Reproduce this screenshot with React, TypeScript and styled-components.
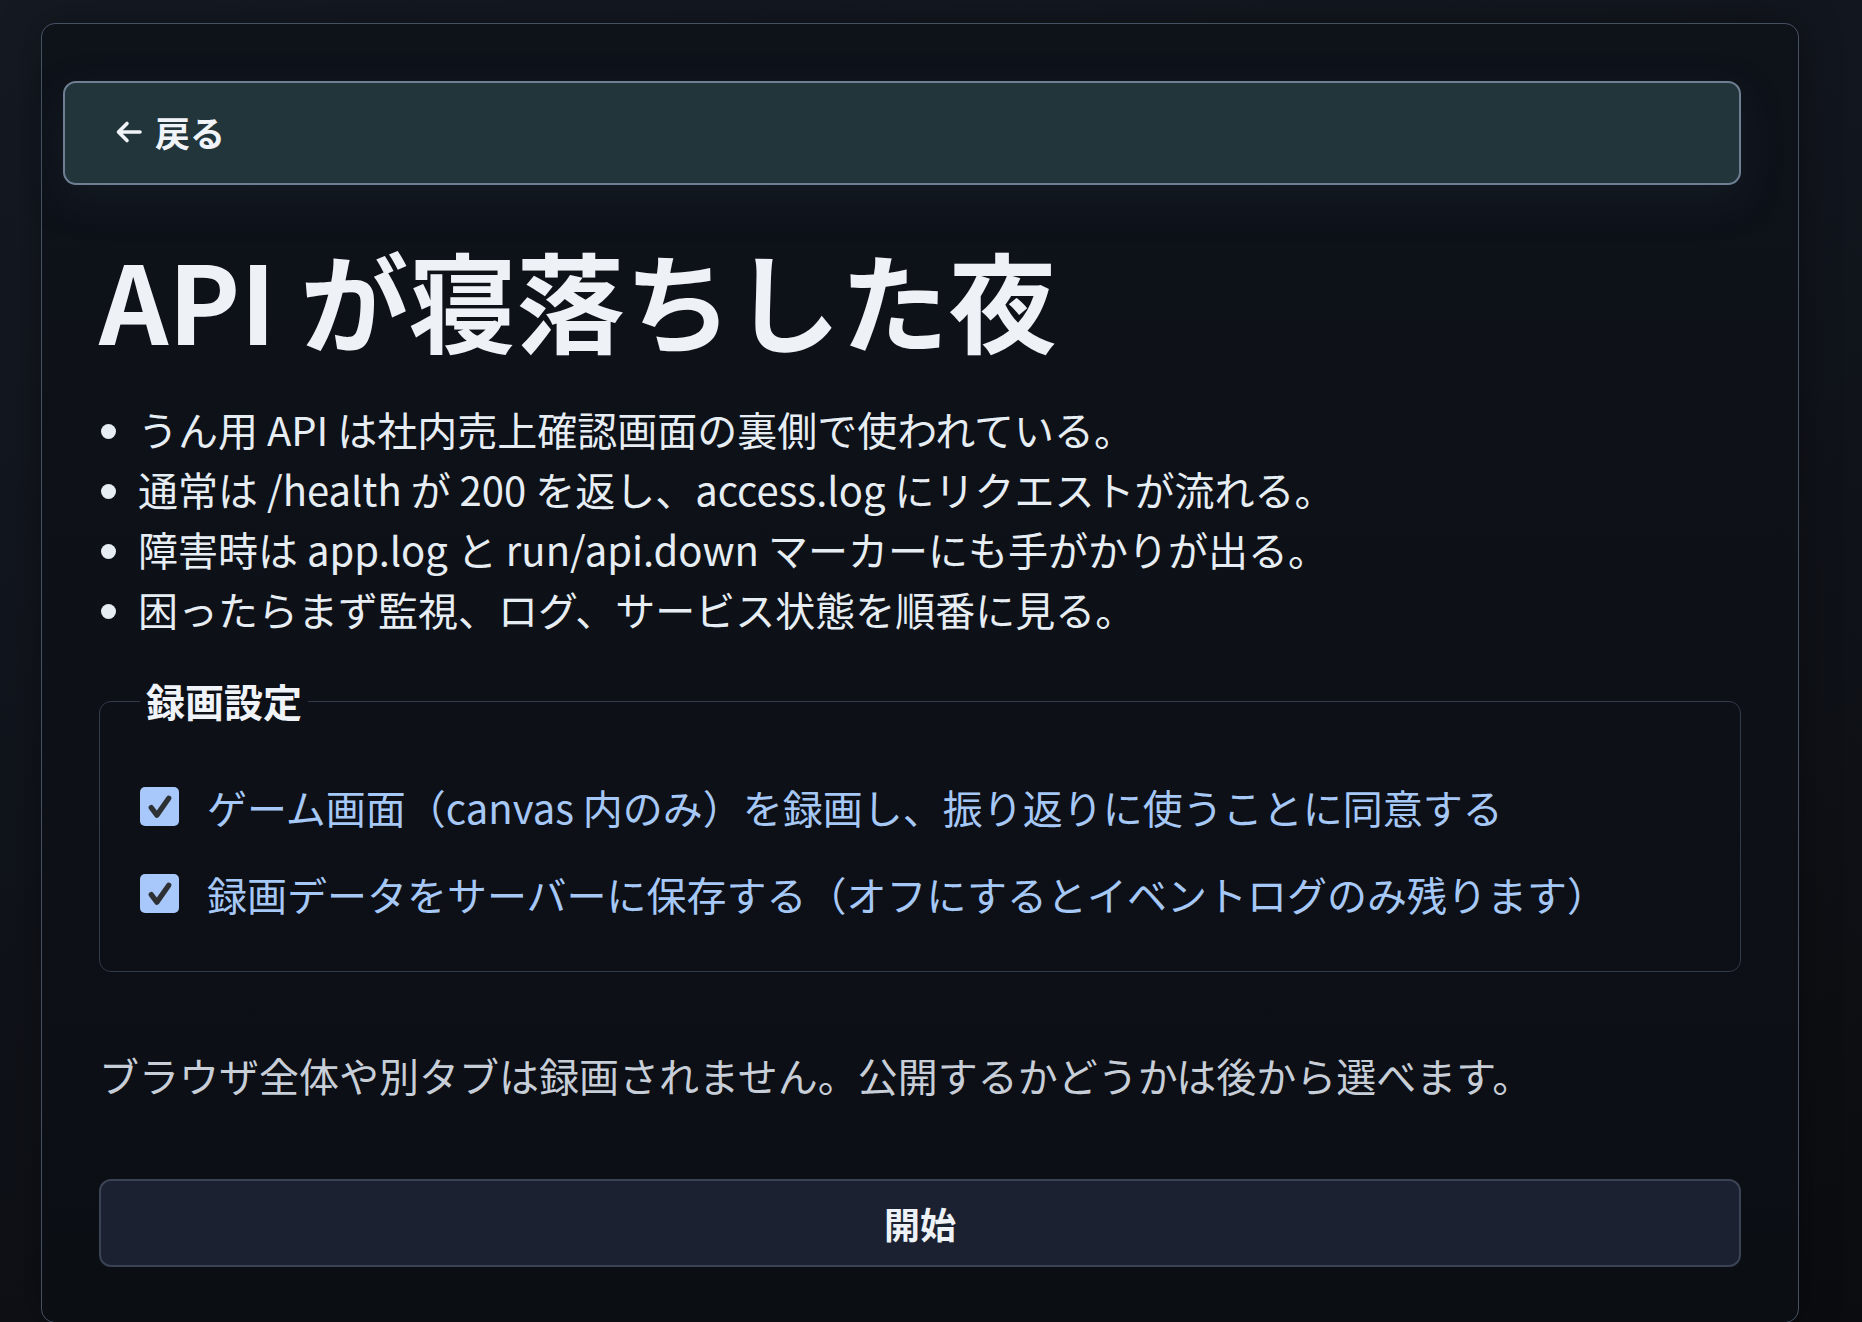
import React, { useState } from "react";
import styled, { createGlobalStyle } from "styled-components";

const GlobalStyle = createGlobalStyle`
  html, body {
    margin: 0;
    padding: 0;
    background: linear-gradient(165deg, #151a22 0%, #10141b 45%, #0b0c0f 100%);
    min-height: 100%;
  }
  body {
    font-family: "Noto Sans CJK JP", "Noto Sans", sans-serif;
    color: #e6edf3;
  }
`;

const Page = styled.div`
  padding: 23px 0 0 41px;
`;

const Card = styled.main`
  width: 1758px;
  box-sizing: border-box;
  padding: 57px 57px 55px;
  border: 1.5px solid #465063;
  border-radius: 14px;
  background: linear-gradient(180deg, #0e1219 0%, #0d1017 60%, #0b0e13 100%);
  box-shadow: 0 0 40px rgba(0, 0, 0, 0.35);
  display: flex;
  flex-direction: column;
`;

const BackButton = styled.button`
  margin-left: -36px;
  height: 104px;
  padding: 0 50px 3px;
  display: flex;
  align-items: center;
  gap: 12px;
  background: #22353a;
  border: 2px solid #6f7f93;
  border-radius: 13px;
  color: #f0f4f8;
  font-family: inherit;
  font-size: 35px;
  font-weight: 700;
  cursor: pointer;
  box-shadow: 0 14px 40px rgba(40, 55, 70, 0.28);
`;

const Title = styled.h1`
  margin: 49px 0 0;
  font-size: 108px;
  line-height: 1.2;
  font-weight: 700;
  color: #eef2f7;
  letter-spacing: 0;
`;

const Bullets = styled.ul`
  margin: 35px 0 0;
  padding: 0 0 0 39px;
  font-size: 40px;
  line-height: 60px;
  color: #e6edf3;
`;

const Fieldset = styled.fieldset`
  margin: 33px 0 0;
  padding: 45px 40px 47px;
  border: 1.5px solid #323b4a;
  border-radius: 12px;
  display: flex;
  flex-direction: column;
  gap: 27px;
`;

const Legend = styled.legend`
  padding: 0 6px 4px;
  font-size: 39px;
  line-height: 56px;
  font-weight: 700;
  color: #f0f4f8;
`;

const Row = styled.label`
  display: flex;
  align-items: center;
  gap: 28px;
  font-size: 40px;
  line-height: 60px;
  color: #a6c8f6;
  cursor: pointer;
`;

const Box = styled.span<{ $on: boolean }>`
  flex: none;
  width: 39px;
  height: 39px;
  border-radius: 5px;
  box-sizing: border-box;
  background: ${(p) => (p.$on ? "#a8c7fa" : "transparent")};
  border: ${(p) => (p.$on ? "none" : "2px solid #a8c7fa")};
  display: flex;
  align-items: center;
  justify-content: center;
`;

const Note = styled.p`
  margin: 73px 0 0;
  font-size: 40px;
  line-height: 60px;
  color: #c7ced8;
`;

const StartButton = styled.button`
  margin-top: 74px;
  height: 88px;
  background: #1b2130;
  border: 2px solid #3a4353;
  border-radius: 12px;
  color: #eef2f7;
  font-family: inherit;
  font-size: 36px;
  font-weight: 700;
  cursor: pointer;
`;

const Check = ({ on, onToggle }: { on: boolean; onToggle: () => void }) => (
  <Box $on={on} onClick={onToggle}>
    {on && (
      <svg width="30" height="30" viewBox="0 0 24 24" fill="none">
        <path d="M5 12.5 L9.5 18.5 L19 5" stroke="#2e3134" strokeWidth="4.2" strokeLinecap="round" strokeLinejoin="round" />
      </svg>
    )}
  </Box>
);

const items = [
  "うん用 API は社内売上確認画面の裏側で使われている。",
  "通常は /health が 200 を返し、access.log にリクエストが流れる。",
  "障害時は app.log と run/api.down マーカーにも手がかりが出る。",
  "困ったらまず監視、ログ、サービス状態を順番に見る。",
];

export default function App() {
  const [consent, setConsent] = useState(true);
  const [store, setStore] = useState(true);

  return (
    <Page>
      <GlobalStyle />
      <Card>
        <BackButton>
          <svg width="28" height="24" viewBox="0 0 28 24" fill="none">
            <path d="M25 12H4 M12 3.5 L3.5 12 L12 20.5" stroke="#f0f4f8" strokeWidth="3.6" strokeLinecap="round" strokeLinejoin="round" />
          </svg>
          戻る
        </BackButton>
        <Title>API が寝落ちした夜</Title>
        <Bullets>
          {items.map((t) => (
            <li key={t}>{t}</li>
          ))}
        </Bullets>
        <Fieldset>
          <Legend>録画設定</Legend>
          <Row onClick={(e) => e.preventDefault()}>
            <Check on={consent} onToggle={() => setConsent(!consent)} />
            ゲーム画面（canvas 内のみ）を録画し、振り返りに使うことに同意する
          </Row>
          <Row onClick={(e) => e.preventDefault()}>
            <Check on={store} onToggle={() => setStore(!store)} />
            録画データをサーバーに保存する（オフにするとイベントログのみ残ります）
          </Row>
        </Fieldset>
        <Note>ブラウザ全体や別タブは録画されません。公開するかどうかは後から選べます。</Note>
        <StartButton>開始</StartButton>
      </Card>
    </Page>
  );
}
